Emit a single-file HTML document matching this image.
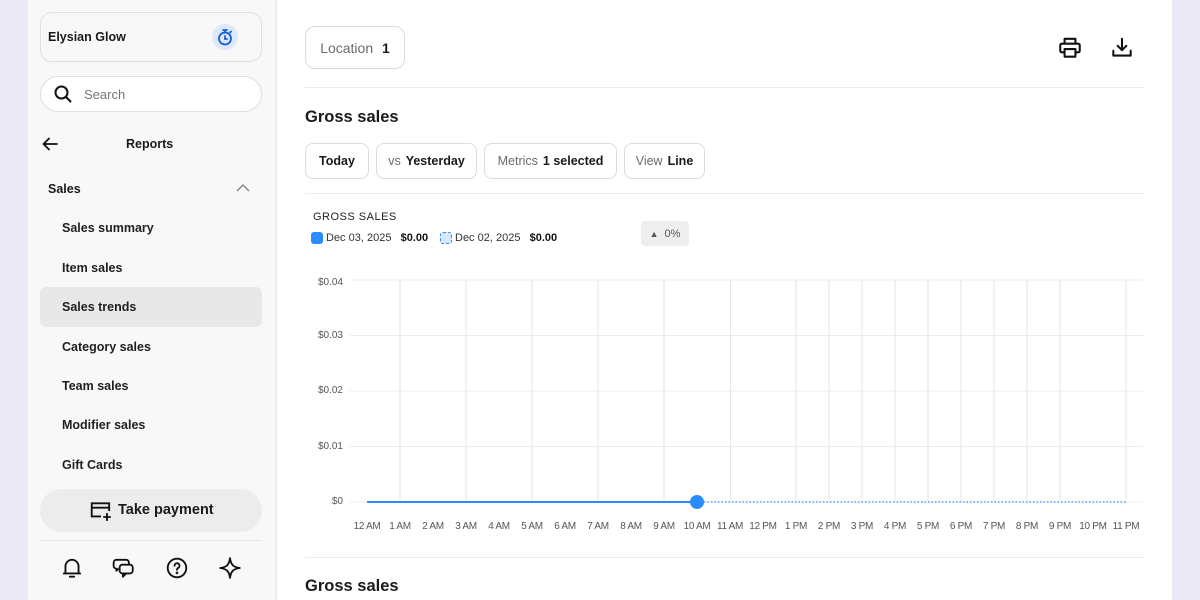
<!DOCTYPE html>
<html><head><meta charset="utf-8"><style>
*{box-sizing:border-box;margin:0;padding:0}
body{width:1200px;height:600px;overflow:hidden;background:#ece9f7;font-family:"Liberation Sans",Arial,sans-serif;color:#1a1a1a;position:relative}
.side{position:absolute;left:28px;top:0;width:248px;height:600px;background:#f8f8f8;border-right:1px solid #ececec}
.main{position:absolute;left:277px;top:0;width:895px;height:600px;background:#fff}
.abs{position:absolute}
.b{font-weight:bold}
.nav{position:absolute;left:34px;font-size:12.5px;font-weight:bold;color:#1f1f1f}
.pill{position:absolute;height:36px;border:1px solid #dcdcdc;border-radius:8px;font-size:12.5px;display:flex;align-items:center;justify-content:center;gap:5px;white-space:nowrap}
.pill .l{color:#6b6b6b}
.pill .v{font-weight:bold;color:#1a1a1a}
.yl{position:absolute;font-size:10px;color:#555;text-align:right;width:40px;left:26px}
.xl{position:absolute;top:521px;font-size:10px;color:#555;transform:translateX(-50%);white-space:nowrap;letter-spacing:-.3px}
</style></head><body>
<div class="side">
  <div class="abs" style="left:12px;top:12px;width:222px;height:50px;border:1px solid #e0e0e0;border-radius:12px;background:#f8f8f8"></div>
  <div class="abs b" style="left:20px;top:30px;font-size:12.5px">Elysian Glow</div>
  <div class="abs" style="left:184px;top:24px;width:26px;height:26px;border-radius:50%;background:#dde9fb"></div>
  <svg class="abs" style="left:187px;top:27px" width="20" height="20" viewBox="0 0 20 20" fill="none" stroke="#1460d8" stroke-width="1.8" stroke-linecap="round"><circle cx="10" cy="11.5" r="6"/><path d="M8 3h4M10 3v2.5M10 9v3h2M15 5.5l1 -1"/></svg>
  <div class="abs" style="left:12px;top:76px;width:222px;height:36px;border:1px solid #dedede;border-radius:18px;background:#fff"></div>
  <svg class="abs" style="left:25px;top:84px" width="20" height="20" viewBox="0 0 20 20" fill="none" stroke="#111" stroke-width="2" stroke-linecap="round"><circle cx="8.5" cy="8.5" r="6"/><path d="M13 13l4.5 4.5"/></svg>
  <div class="abs" style="left:56px;top:87px;font-size:13px;color:#777">Search</div>
  <svg class="abs" style="left:13px;top:135px" width="18" height="18" viewBox="0 0 18 18" fill="none" stroke="#111" stroke-width="1.8" stroke-linecap="round" stroke-linejoin="round"><path d="M16 9H3M8 3.5L2.5 9 8 14.5"/></svg>
  <div class="abs b" style="left:98px;top:137px;font-size:12.5px">Reports</div>
  <div class="abs b" style="left:20px;top:182px;font-size:12.5px">Sales</div>
  <svg class="abs" style="left:207px;top:182px" width="16" height="12" viewBox="0 0 16 12" fill="none" stroke="#888" stroke-width="1.5"><path d="M2 9l6-6 6 6"/></svg>
  <div class="nav" style="top:221px">Sales summary</div>
  <div class="nav" style="top:261px">Item sales</div>
  <div class="abs" style="left:12px;top:287px;width:222px;height:40px;border-radius:6px;background:#e8e8e8"></div>
  <div class="nav" style="top:300px">Sales trends</div>
  <div class="nav" style="top:340px">Category sales</div>
  <div class="nav" style="top:379px">Team sales</div>
  <div class="nav" style="top:418px">Modifier sales</div>
  <div class="nav" style="top:458px">Gift Cards</div>
  <div class="abs" style="left:12px;top:489px;width:222px;height:43px;border-radius:22px;background:#ececec"></div>
  <svg class="abs" style="left:61px;top:499px" width="24" height="24" viewBox="0 0 22 22" fill="none" stroke="#111" stroke-width="1.7"><path d="M11 16H2.5V4h16v7M2.5 8h16M16.5 13v7M13 16.5h7"/></svg>
  <div class="abs b" style="left:90px;top:502px;font-size:14.5px">Take payment</div>
  <div class="abs" style="left:12px;top:540px;width:222px;height:1px;background:#e8e8e8"></div>
  <svg class="abs" style="left:32px;top:556px" width="24" height="24" viewBox="0 0 22 22" fill="none" stroke="#111" stroke-width="1.7" stroke-linecap="round"><path d="M5 16V9.5a6 6 0 0 1 12 0V16M3.5 16h15M9 19h4"/></svg>
  <svg class="abs" style="left:84px;top:556px" width="24" height="24" viewBox="0 0 22 22" fill="none" stroke="#111" stroke-width="1.7" stroke-linejoin="round"><path d="M4 3.5h9a2.5 2.5 0 0 1 2.5 2.5v2M4 3.5a2.5 2.5 0 0 0-2.5 2.5v3A2.5 2.5 0 0 0 4 11.5v2l2-2"/><rect x="7" y="8" width="12" height="8" rx="2.5"/><path d="M10 16v3l3-3"/></svg>
  <svg class="abs" style="left:137px;top:556px" width="24" height="24" viewBox="0 0 22 22" fill="none" stroke="#111" stroke-width="1.7" stroke-linecap="round"><circle cx="11" cy="11" r="8.5"/><path d="M8.7 9a2.3 2.3 0 1 1 3.3 2c-.8.4-1 .9-1 1.6"/><circle cx="11" cy="15.5" r=".4" fill="#111"/></svg>
  <svg class="abs" style="left:190px;top:556px" width="24" height="24" viewBox="0 0 22 22" fill="none" stroke="#111" stroke-width="1.7" stroke-linejoin="round"><path d="M11 2C11.8 8 14 10.2 20 11 14 11.8 11.8 14 11 20 10.2 14 8 11.8 2 11 8 10.2 10.2 8 11 2Z"/></svg>
</div>
<div class="main">
  <div class="pill" style="left:28px;top:26px;width:100px;height:43px;border-radius:10px;font-size:14px"><span class="l">Location</span><span class="v">&nbsp;1</span></div>
  <svg class="abs" style="left:780px;top:35px" width="26" height="26" viewBox="0 0 24 24" fill="none" stroke="#111" stroke-width="1.9" stroke-linejoin="round"><path d="M7 8V3.5h10V8M7 16H4.5a1.5 1.5 0 0 1-1.5-1.5V9.5A1.5 1.5 0 0 1 4.5 8h15A1.5 1.5 0 0 1 21 9.5v5a1.5 1.5 0 0 1-1.5 1.5H17M7 13h10v7H7z"/></svg>
  <svg class="abs" style="left:832px;top:35px" width="26" height="26" viewBox="0 0 24 24" fill="none" stroke="#111" stroke-width="1.9" stroke-linecap="round" stroke-linejoin="round"><path d="M12 3.5v10M8 10l4 4 4-4M4 14.5v4.5h16v-4.5"/></svg>
  <div class="abs" style="left:28px;top:87px;width:839px;height:1px;background:#ececec"></div>
  <div class="abs b" style="left:28px;top:108px;font-size:16.5px">Gross sales</div>
  <div class="pill" style="left:28px;top:143px;width:64px"><span class="v">Today</span></div>
  <div class="pill" style="left:99px;top:143px;width:101px"><span class="l">vs</span><span class="v">Yesterday</span></div>
  <div class="pill" style="left:207px;top:143px;width:133px"><span class="l">Metrics</span><span class="v">1 selected</span></div>
  <div class="pill" style="left:347px;top:143px;width:81px"><span class="l">View</span><span class="v">Line</span></div>
  <div class="abs" style="left:28px;top:193px;width:839px;height:1px;background:#ececec"></div>
  <div class="abs" style="left:36px;top:211px;font-size:11px;letter-spacing:.5px;color:#222">GROSS SALES</div>
  <div class="abs" style="left:34px;top:232px;width:12px;height:12px;border-radius:3px;background:#2b8cff"></div>
  <div class="abs" style="left:49px;top:232px;font-size:11px;color:#333">Dec 03, 2025 &nbsp;&nbsp;<b style="color:#111">$0.00</b></div>
  <div class="abs" style="left:163px;top:232px;width:12px;height:12px;border-radius:3px;background:#d6e8ff;border:1.5px dashed #2b8cff"></div>
  <div class="abs" style="left:178px;top:232px;font-size:11px;color:#333">Dec 02, 2025 &nbsp;&nbsp;<b style="color:#111">$0.00</b></div>
  <div class="abs" style="left:364px;top:221px;width:48px;height:25px;border-radius:4px;background:#eeeeee;font-size:11px;color:#555;display:flex;align-items:center;justify-content:center;gap:6px"><span style="font-size:9px">▲</span>0%</div>
  <svg class="abs" style="left:0;top:0" width="895" height="600">
    <g stroke="#ececec" stroke-width="1">
      <line x1="73" y1="280" x2="866" y2="280"/><line x1="73" y1="335.5" x2="866" y2="335.5"/><line x1="73" y1="391" x2="866" y2="391"/><line x1="73" y1="446.5" x2="866" y2="446.5"/><line x1="73" y1="502" x2="866" y2="502"/>
    </g>
    <g stroke="#e6e6e6" stroke-width="1">
      <line x1="123" y1="280" x2="123" y2="502"/><line x1="189" y1="280" x2="189" y2="502"/><line x1="255" y1="280" x2="255" y2="502"/><line x1="321" y1="280" x2="321" y2="502"/><line x1="387" y1="280" x2="387" y2="502"/><line x1="453.5" y1="280" x2="453.5" y2="502"/><line x1="519" y1="280" x2="519" y2="502"/><line x1="552" y1="280" x2="552" y2="502"/><line x1="585" y1="280" x2="585" y2="502"/><line x1="618" y1="280" x2="618" y2="502"/><line x1="651" y1="280" x2="651" y2="502"/><line x1="684" y1="280" x2="684" y2="502"/><line x1="717" y1="280" x2="717" y2="502"/><line x1="750" y1="280" x2="750" y2="502"/><line x1="783" y1="280" x2="783" y2="502"/><line x1="849" y1="280" x2="849" y2="502"/>
    </g>
    <line x1="90" y1="502" x2="420" y2="502" stroke="#2b8cff" stroke-width="2"/>
    <line x1="420" y1="502" x2="849" y2="502" stroke="#2b8cff" stroke-width="1.2" stroke-dasharray="1.5 2"/>
    <circle cx="420" cy="502" r="7" fill="#2b8cff"/>
  </svg>
  <div class="yl" style="top:277px">$0.04</div>
  <div class="yl" style="top:330px">$0.03</div>
  <div class="yl" style="top:385px">$0.02</div>
  <div class="yl" style="top:441px">$0.01</div>
  <div class="yl" style="top:496px">$0</div>
  <div class="xl" style="left:90px">12 AM</div><div class="xl" style="left:123px">1 AM</div><div class="xl" style="left:156px">2 AM</div><div class="xl" style="left:189px">3 AM</div><div class="xl" style="left:222px">4 AM</div><div class="xl" style="left:255px">5 AM</div><div class="xl" style="left:288px">6 AM</div><div class="xl" style="left:321px">7 AM</div><div class="xl" style="left:354px">8 AM</div><div class="xl" style="left:387px">9 AM</div><div class="xl" style="left:420px">10 AM</div><div class="xl" style="left:453px">11 AM</div><div class="xl" style="left:486px">12 PM</div><div class="xl" style="left:519px">1 PM</div><div class="xl" style="left:552px">2 PM</div><div class="xl" style="left:585px">3 PM</div><div class="xl" style="left:618px">4 PM</div><div class="xl" style="left:651px">5 PM</div><div class="xl" style="left:684px">6 PM</div><div class="xl" style="left:717px">7 PM</div><div class="xl" style="left:750px">8 PM</div><div class="xl" style="left:783px">9 PM</div><div class="xl" style="left:816px">10 PM</div><div class="xl" style="left:849px">11 PM</div>
  <div class="abs" style="left:28px;top:557px;width:839px;height:1px;background:#ececec"></div>
  <div class="abs b" style="left:28px;top:577px;font-size:16.5px">Gross sales</div>
</div>
</body></html>
